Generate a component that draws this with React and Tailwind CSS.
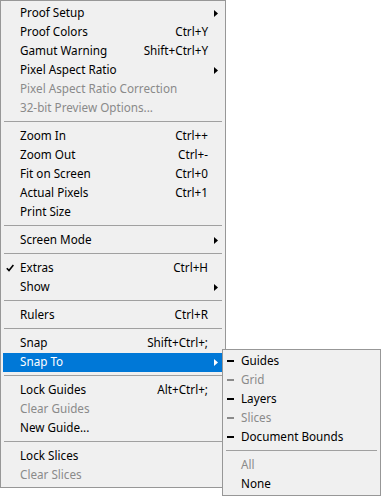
import React from "react";

const mainItems = [
  { label: "Proof Setup", sub: true },
  { label: "Proof Colors", key: "Ctrl+Y" },
  { label: "Gamut Warning", key: "Shift+Ctrl+Y" },
  { label: "Pixel Aspect Ratio", sub: true },
  { label: "Pixel Aspect Ratio Correction", disabled: true },
  { label: "32-bit Preview Options...", disabled: true },
  { sep: true },
  { label: "Zoom In", key: "Ctrl++" },
  { label: "Zoom Out", key: "Ctrl+-" },
  { label: "Fit on Screen", key: "Ctrl+0" },
  { label: "Actual Pixels", key: "Ctrl+1" },
  { label: "Print Size" },
  { sep: true },
  { label: "Screen Mode", sub: true },
  { sep: true },
  { label: "Extras", key: "Ctrl+H", checked: true },
  { label: "Show", sub: true },
  { sep: true },
  { label: "Rulers", key: "Ctrl+R" },
  { sep: true },
  { label: "Snap", key: "Shift+Ctrl+;" },
  { label: "Snap To", sub: true, active: true },
  { sep: true },
  { label: "Lock Guides", key: "Alt+Ctrl+;" },
  { label: "Clear Guides", disabled: true },
  { label: "New Guide..." },
  { sep: true },
  { label: "Lock Slices" },
  { label: "Clear Slices", disabled: true },
];

const snapItems = [
  { label: "Guides", dash: true },
  { label: "Grid", dash: true, disabled: true },
  { label: "Layers", dash: true },
  { label: "Slices", dash: true, disabled: true },
  { label: "Document Bounds", dash: true },
  { sep: true },
  { label: "All", disabled: true },
  { label: "None" },
];

const Separator = () => (
  <div className="h-[9px] pt-[3px] px-[1px]">
    <div className="h-px bg-[#a0a0a0]"></div>
  </div>
);

const Arrow = ({ color }) => (
  <svg width="4" height="7" viewBox="0 0 4 7">
    <path d="M0 0 L4 3.5 L0 7 Z" fill={color} />
  </svg>
);

const Check = () => (
  <svg width="8" height="8" viewBox="0 0 8 8" className="ml-[3px]">
    <path d="M0.8 4.2 L3 6.6 L7.4 1" fill="none" stroke="#000" strokeWidth="1.6" />
  </svg>
);

const MenuRow = ({ item }) => {
  const text = item.active
    ? "text-white"
    : item.disabled
    ? "text-[#8a8a8a]"
    : "text-black";
  return (
    <div
      className={`h-[19px] pb-[1px] flex items-center ${text} ${
        item.active ? "bg-[#0078d7]" : ""
      }`}
    >
      <div className="w-[17px] flex items-center">
        {item.checked && <Check />}
      </div>
      <span className="flex-1 whitespace-nowrap">{item.label}</span>
      {item.key && <span className="whitespace-nowrap">{item.key}</span>}
      <div className="w-[15px] flex items-center pl-[6px]">
        {item.sub && <Arrow color={item.active ? "#fff" : "#000"} />}
      </div>
    </div>
  );
};

const SubRow = ({ item }) => (
  <div
    className={`h-[19px] pb-[1px] flex items-center ${
      item.disabled ? "text-[#8a8a8a]" : "text-black"
    }`}
  >
    <div className="w-[16px] pl-[2px] flex items-center">
      {item.dash && (
        <div
          className={`w-[7px] h-[2px] ${
            item.disabled ? "bg-[#8a8a8a]" : "bg-black"
          }`}
        ></div>
      )}
    </div>
    <span className="whitespace-nowrap">{item.label}</span>
  </div>
);

export default function App() {
  return (
    <div
      className="relative w-[382px] h-[498px] bg-white text-[11.7px] leading-none"
      style={{ fontFamily: '"Noto Sans", "Noto Sans CJK KR", sans-serif' }}
    >
      <div className="w-[226px] border border-[#979797] bg-[#f0f0f0] pt-[3px] pb-[2px] px-[2px]">
        {mainItems.map((item, i) =>
          item.sep ? <Separator key={i} /> : <MenuRow key={i} item={item} />
        )}
      </div>

      <div className="absolute left-[222px] top-[349px] w-[159px] border border-[#979797] bg-[#f0f0f0] pt-[2px] pb-[1px] px-[2px]">
        {snapItems.map((item, i) =>
          item.sep ? <Separator key={i} /> : <SubRow key={i} item={item} />
        )}
      </div>
    </div>
  );
}
